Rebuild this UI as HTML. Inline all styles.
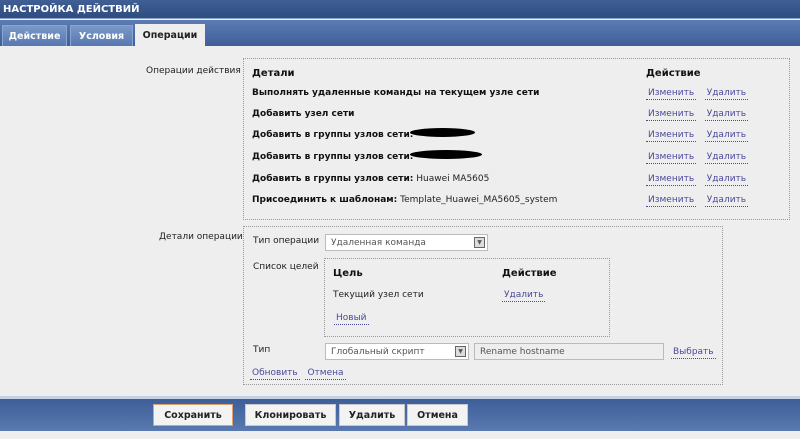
<!DOCTYPE html>
<html><head><meta charset="utf-8"><style>
*{margin:0;padding:0;box-sizing:border-box}
body{width:800px;height:439px;background:#eeeeee;font-family:"DejaVu Sans","Liberation Sans",sans-serif;font-size:9px;color:#222;position:relative;overflow:hidden}
.a{position:absolute;white-space:nowrap}
.hdr{left:0;top:0;width:800px;height:19px;background:linear-gradient(#3f5f95,#2e4c80);color:#fff;font-weight:bold;font-size:10px;padding:4px 0 0 3px;border-bottom:1px solid #8ea6cc}
.tabs{left:0;top:20px;width:800px;height:26px;background:linear-gradient(#5c7cb3,#3d5e97)}
.tab{position:absolute;top:25px;height:21px;background:linear-gradient(#7a98c8,#5677b0);color:#fff;font-weight:bold;font-size:9.5px;padding:5px 0 0;text-align:center;border:1px solid #8aa5d0;border-bottom:none}
.tab.on{background:#eeeeee;color:#222;border-color:#eee}
.box{border:1px dotted #999}
b{font-weight:bold;color:#111}
.l{color:#4a4a9a;border-bottom:1px dotted #4a4a9a;padding:0 2px 1px}
.sel{background:#fff;border:1px solid #bbb;height:17px;padding:3px 5px;color:#555}
.dd{position:absolute;right:2px;top:2px;width:11px;height:11px;border:1px solid #666;background:#ddd;font-size:6px;text-align:center;line-height:10px}
.blot{background:#000;border-radius:50%;height:9px}
.foot{left:0;top:396px;width:800px;height:35px;background:linear-gradient(#3d5e97,#5979b0);border-top:3px solid #c5d2e6}
.btn{position:absolute;top:404px;height:22px;background:#f3f3f3;border:1px solid #c8c8c8;font-weight:bold;font-size:9.5px;text-align:center;padding-top:5px;color:#222}
</style></head><body>
<div class="a hdr">НАСТРОЙКА ДЕЙСТВИЙ</div>
<div class="a tabs"></div>
<div class="tab" style="left:2px;width:65px">Действие</div>
<div class="tab" style="left:70px;width:63px">Условия</div>
<div class="tab on" style="left:135px;width:70px;top:24px;height:22px">Операции</div>

<div class="a" style="left:146px;top:66px">Операции действия</div>
<div class="a box" style="left:243px;top:58px;width:547px;height:162px"></div>
<div class="a" style="left:252px;top:68px"><b style="font-size:10px">Детали</b></div>
<div class="a" style="left:646px;top:68px"><b style="font-size:10px">Действие</b></div>
<div class="a" style="left:252px;top:88px"><b>Выполнять удаленные команды на текущем узле сети</b></div>
<div class="a" style="left:252px;top:109px"><b>Добавить узел сети</b></div>
<div class="a" style="left:252px;top:130px"><b>Добавить в группы узлов сети:</b></div>
<div class="a blot" style="left:410px;top:128px;width:65px"></div>
<div class="a" style="left:252px;top:152px"><b>Добавить в группы узлов сети:</b></div>
<div class="a blot" style="left:410px;top:150px;width:72px"></div>
<div class="a" style="left:252px;top:174px"><b>Добавить в группы узлов сети:</b> Huawei MA5605</div>
<div class="a" style="left:252px;top:195px"><b>Присоединить к шаблонам:</b> Template_Huawei_MA5605_system</div>
<div class="a" style="left:646px;top:88px"><span class="l">Изменить</span>&nbsp;&nbsp;&nbsp;<span class="l">Удалить</span></div>
<div class="a" style="left:646px;top:109px"><span class="l">Изменить</span>&nbsp;&nbsp;&nbsp;<span class="l">Удалить</span></div>
<div class="a" style="left:646px;top:130px"><span class="l">Изменить</span>&nbsp;&nbsp;&nbsp;<span class="l">Удалить</span></div>
<div class="a" style="left:646px;top:152px"><span class="l">Изменить</span>&nbsp;&nbsp;&nbsp;<span class="l">Удалить</span></div>
<div class="a" style="left:646px;top:174px"><span class="l">Изменить</span>&nbsp;&nbsp;&nbsp;<span class="l">Удалить</span></div>
<div class="a" style="left:646px;top:195px"><span class="l">Изменить</span>&nbsp;&nbsp;&nbsp;<span class="l">Удалить</span></div>

<div class="a" style="left:159px;top:232px">Детали операции</div>
<div class="a box" style="left:243px;top:226px;width:480px;height:159px"></div>
<div class="a" style="left:253px;top:236px">Тип операции</div>
<div class="a sel" style="left:325px;top:234px;width:163px">Удаленная команда<span class="dd">▼</span></div>
<div class="a" style="left:253px;top:262px">Список целей</div>
<div class="a box" style="left:324px;top:258px;width:286px;height:79px"></div>
<div class="a" style="left:333px;top:268px"><b style="font-size:10px">Цель</b></div>
<div class="a" style="left:502px;top:268px"><b style="font-size:10px">Действие</b></div>
<div class="a" style="left:333px;top:290px">Текущий узел сети</div>
<div class="a" style="left:502px;top:290px"><span class="l">Удалить</span></div>
<div class="a" style="left:334px;top:313px"><span class="l">Новый</span></div>
<div class="a" style="left:253px;top:345px">Тип</div>
<div class="a sel" style="left:325px;top:343px;width:144px">Глобальный скрипт<span class="dd">▼</span></div>
<div class="a sel" style="left:474px;top:343px;width:190px;background:#eee;color:#555">Rename hostname</div>
<div class="a" style="left:671px;top:347px"><span class="l">Выбрать</span></div>
<div class="a" style="left:250px;top:368px"><span class="l">Обновить</span>&nbsp;&nbsp;<span class="l">Отмена</span></div>

<div class="a foot"></div>
<div class="btn" style="left:153px;width:80px;border:1px solid #e0a070">Сохранить</div>
<div class="btn" style="left:245px;width:91px">Клонировать</div>
<div class="btn" style="left:339px;width:66px">Удалить</div>
<div class="btn" style="left:407px;width:61px">Отмена</div>
</body></html>
